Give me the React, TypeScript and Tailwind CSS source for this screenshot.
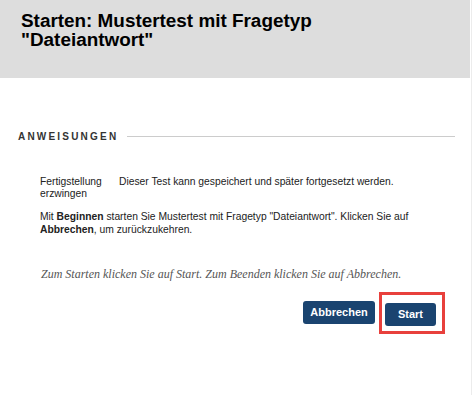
export default function App() {
  return (
    <div className="flex min-h-[395px] w-[472px] bg-white" style={{ fontFamily: '"Liberation Sans", Arial, sans-serif' }}>
      <div className="w-[470px] shrink-0">
        {/* Title bar */}
        <div className="h-[78px] bg-[#dddddd] px-[21px] pt-[11px]">
          <h1 className="w-[410px] text-[18.9px] font-bold leading-[19px] text-black">
            Starten: Mustertest mit Fragetyp "Dateiantwort"
          </h1>
        </div>

        {/* Instructions */}
        <div className="pt-[51px] pl-[18px] pr-[15px]">
          <div className="flex items-center gap-[9px]">
            <h2 className="text-[10px] font-bold tracking-[2.2px] text-[#333]">ANWEISUNGEN</h2>
            <div className="h-px flex-1 bg-[#cccccc]" />
          </div>

          <div className="pl-[22px] pt-[32px] text-[10.3px] leading-[12px] text-[#222]">
            <div className="flex">
              <div className="w-[79px] shrink-0">Fertigstellung erzwingen</div>
              <div>Dieser Test kann gespeichert und später fortgesetzt werden.</div>
            </div>
            <p className="mt-[10px] w-[400px] leading-[13px]">
              Mit <b>Beginnen</b> starten Sie Mustertest mit Fragetyp "Dateiantwort". Klicken Sie auf{" "}
              <b>Abbrechen</b>, um zurückzukehren.
            </p>
          </div>

          <p
            className="pl-[23px] pt-[29px] text-[12px] italic text-[#555]"
            style={{ fontFamily: '"Liberation Serif", Georgia, serif' }}
          >
            Zum Starten klicken Sie auf Start. Zum Beenden klicken Sie auf Abbrechen.
          </p>

          <div className="mt-[18px] flex justify-end gap-[10px] pr-[19px]">
            <button className="h-[23px] w-[72px] rounded-[3px] bg-[#1a4470] text-[11px] font-bold text-white">
              Abbrechen
            </button>
            <div className="relative">
              <button className="h-[23px] w-[51px] rounded-[3px] bg-[#1a4470] text-[11px] font-bold text-white">
                Start
              </button>
              {/* highlight marker */}
              <span className="pointer-events-none absolute left-[-6px] top-[-9px] h-[42px] w-[66px] border-[3px] border-[#e8403c]" />
            </div>
          </div>
        </div>
      </div>
      <div className="w-px" />
      <div className="w-px bg-[#ececec]" />
    </div>
  );
}
